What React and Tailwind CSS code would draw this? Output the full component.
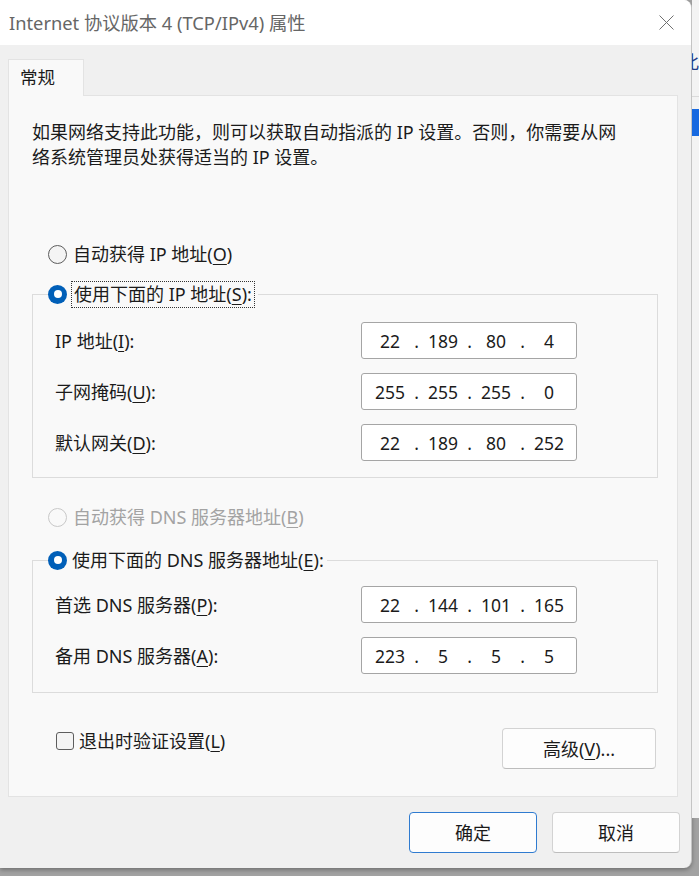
import { Fragment } from "react"

// Windows "Internet 协议版本 4 (TCP/IPv4) 属性" dialog
const FONT = "font-['Noto_Sans','Noto_Sans_CJK_SC',sans-serif]"

function Key({ children }) {
  return <span className="underline decoration-1 underline-offset-[3px]">{children}</span>
}

function Radio({ checked, disabled }) {
  if (checked)
    return (
      <span className="flex h-[19px] w-[19px] shrink-0 items-center justify-center rounded-full bg-[#005fb8]">
        <span className="h-[8px] w-[8px] rounded-full bg-white" />
      </span>
    )
  return (
    <span
      className={`h-[19px] w-[19px] shrink-0 rounded-full border ${
        disabled ? "border-[#c8c8c8] bg-[#f9f9f9]" : "border-[#5d5d5d] bg-[#f4f4f4]"
      }`}
    />
  )
}

function IpBox({ parts }) {
  return (
    <div className="flex h-[37px] w-[216px] items-center rounded-[3px] border border-[#a5a5a5] bg-white pl-[10px] text-[17.5px] leading-[26px] text-[#1b1b1b]">
      {parts.map((p, i) => (
        <Fragment key={i}>
          <span className="w-[36px] text-center">{p}</span>
          {i < 3 && <span className="w-[17px] text-center">.</span>}
        </Fragment>
      ))}
    </div>
  )
}

function Field({ label, parts }) {
  return (
    <div className="mt-[14px] flex items-center pl-[22px]">
      <span className="w-[306px]">{label}</span>
      <IpBox parts={parts} />
    </div>
  )
}

export default function App() {
  return (
    <div className={`flex h-[876px] w-[699px] items-start overflow-hidden bg-[#a2a2a2] ${FONT}`}>
      {/* 对话框 */}
      <div className="flex h-[868px] w-[692px] shrink-0 flex-col overflow-hidden rounded-tr-[8px] rounded-br-[8px] border-r border-[#c4c4c4] bg-[#f0f0f0] shadow-[0_2px_4px_rgba(0,0,0,0.3)]">
        {/* 标题栏 */}
        <div className="flex h-[45px] shrink-0 items-center justify-between bg-white pl-[9px] pr-[17px]">
          <span className="text-[18.3px] leading-[26px] text-[#666666]">Internet 协议版本 4 (TCP/IPv4) 属性</span>
          <svg width="15" height="15" viewBox="0 0 15 15">
            <path d="M0.5 0.5 L14.5 14.5 M14.5 0.5 L0.5 14.5" stroke="#707070" strokeWidth="1" fill="none" />
          </svg>
        </div>

        {/* 主体 */}
        <div className="flex flex-col px-[8px] pt-[14px] text-[18px] leading-[26px] text-[#1b1b1b]">
          {/* 选项卡 */}
          <div className="relative z-10 -mb-px h-[37px] w-[76px] border-x border-t border-[#e3e3e3] bg-[#f9f9f9] pl-[11px] pt-[4px] text-[17.5px]">
            常规
          </div>

          {/* 面板 */}
          <div className="flex h-[702px] w-[670px] flex-col border border-[#e3e3e3] bg-[#f9f9f9] pl-[23px]">
            <p className="mt-[24px] leading-[25px]">
              如果网络支持此功能，则可以获取自动指派的 IP 设置。否则，你需要从网
              <br />
              络系统管理员处获得适当的 IP 设置。
            </p>

            <div className="ml-[16px] mt-[71px] flex h-[26px] items-center gap-[6px]">
              <Radio />
              <span>
                自动获得 IP 地址(<Key>O</Key>)
              </span>
            </div>

            {/* IP 分组 */}
            <div className="mt-[27px] h-[184px] w-[626px] border border-[#dcdcdc]">
              <div className="-mt-[15px] ml-[15px] flex h-[28px] w-fit items-center gap-[4px] bg-[#f9f9f9] pr-[3px]">
                <Radio checked />
                <span className="border border-dotted border-[#333333] px-[2px] leading-[25px]">
                  使用下面的 IP 地址(<Key>S</Key>):
                </span>
              </div>
              <Field
                label={
                  <>
                    IP 地址(<Key>I</Key>):
                  </>
                }
                parts={["22", "189", "80", "4"]}
              />
              <Field
                label={
                  <>
                    子网掩码(<Key>U</Key>):
                  </>
                }
                parts={["255", "255", "255", "0"]}
              />
              <Field
                label={
                  <>
                    默认网关(<Key>D</Key>):
                  </>
                }
                parts={["22", "189", "80", "252"]}
              />
            </div>

            <div className="ml-[16px] mt-[26px] flex h-[26px] items-center gap-[6px] text-[#a3a3a3]">
              <Radio disabled />
              <span>
                自动获得 DNS 服务器地址(<Key>B</Key>)
              </span>
            </div>

            {/* DNS 分组 */}
            <div className="mt-[30px] h-[133px] w-[626px] border border-[#dcdcdc]">
              <div className="-mt-[15px] ml-[15px] flex h-[28px] w-fit items-center gap-[5px] bg-[#f9f9f9] pr-[3px]">
                <Radio checked />
                <span>
                  使用下面的 DNS 服务器地址(<Key>E</Key>):
                </span>
              </div>
              <div className="flex items-center pl-[22px] pt-[12px]">
                <span className="w-[306px]">
                  首选 DNS 服务器(<Key>P</Key>):
                </span>
                <IpBox parts={["22", "144", "101", "165"]} />
              </div>
              <div className="mt-[14px] flex items-center pl-[22px]">
                <span className="w-[306px]">
                  备用 DNS 服务器(<Key>A</Key>):
                </span>
                <IpBox parts={["223", "5", "5", "5"]} />
              </div>
            </div>

            {/* 底部选项 */}
            <div className="mt-[35px] flex w-[626px] items-start justify-between pr-[2px]">
              <div className="flex h-[26px] items-center gap-[5px] pl-[24px]">
                <span className="h-[18px] w-[18px] rounded-[3px] border border-[#5d5d5d] bg-[#f4f4f4]" />
                <span>
                  退出时验证设置(<Key>L</Key>)
                </span>
              </div>
              <button className="flex h-[41px] w-[154px] items-center justify-center rounded-[4px] border border-[#d3d3d3] border-b-[#bdbdbd] bg-[#fdfdfd]">
                高级(<Key>V</Key>)...
              </button>
            </div>
          </div>

          {/* 确定 / 取消 */}
          <div className="mt-[15px] flex justify-end gap-[15px] pr-[3px]">
            <button className="flex h-[41px] w-[128px] items-center justify-center rounded-[4px] border border-[#2f7bd0] bg-[#fdfdfd]">
              确定
            </button>
            <button className="flex h-[41px] w-[128px] items-center justify-center rounded-[4px] border border-[#d3d3d3] border-b-[#bdbdbd] bg-[#fdfdfd]">
              取消
            </button>
          </div>
        </div>
      </div>

      {/* 后面的窗口边缘 */}
      <div className="flex h-[818px] w-[7px] shrink-0 flex-col overflow-hidden bg-[#f3f3f3]">
        <div className="mt-[49px] -ml-[11px] whitespace-nowrap text-[18px] leading-[26px] text-[#1f3c88]">此</div>
        <div className="mt-[21px] h-px bg-[#dadada]" />
        <div className="mt-[12px] h-[27px] bg-[#1769e0]" />
      </div>
    </div>
  )
}
